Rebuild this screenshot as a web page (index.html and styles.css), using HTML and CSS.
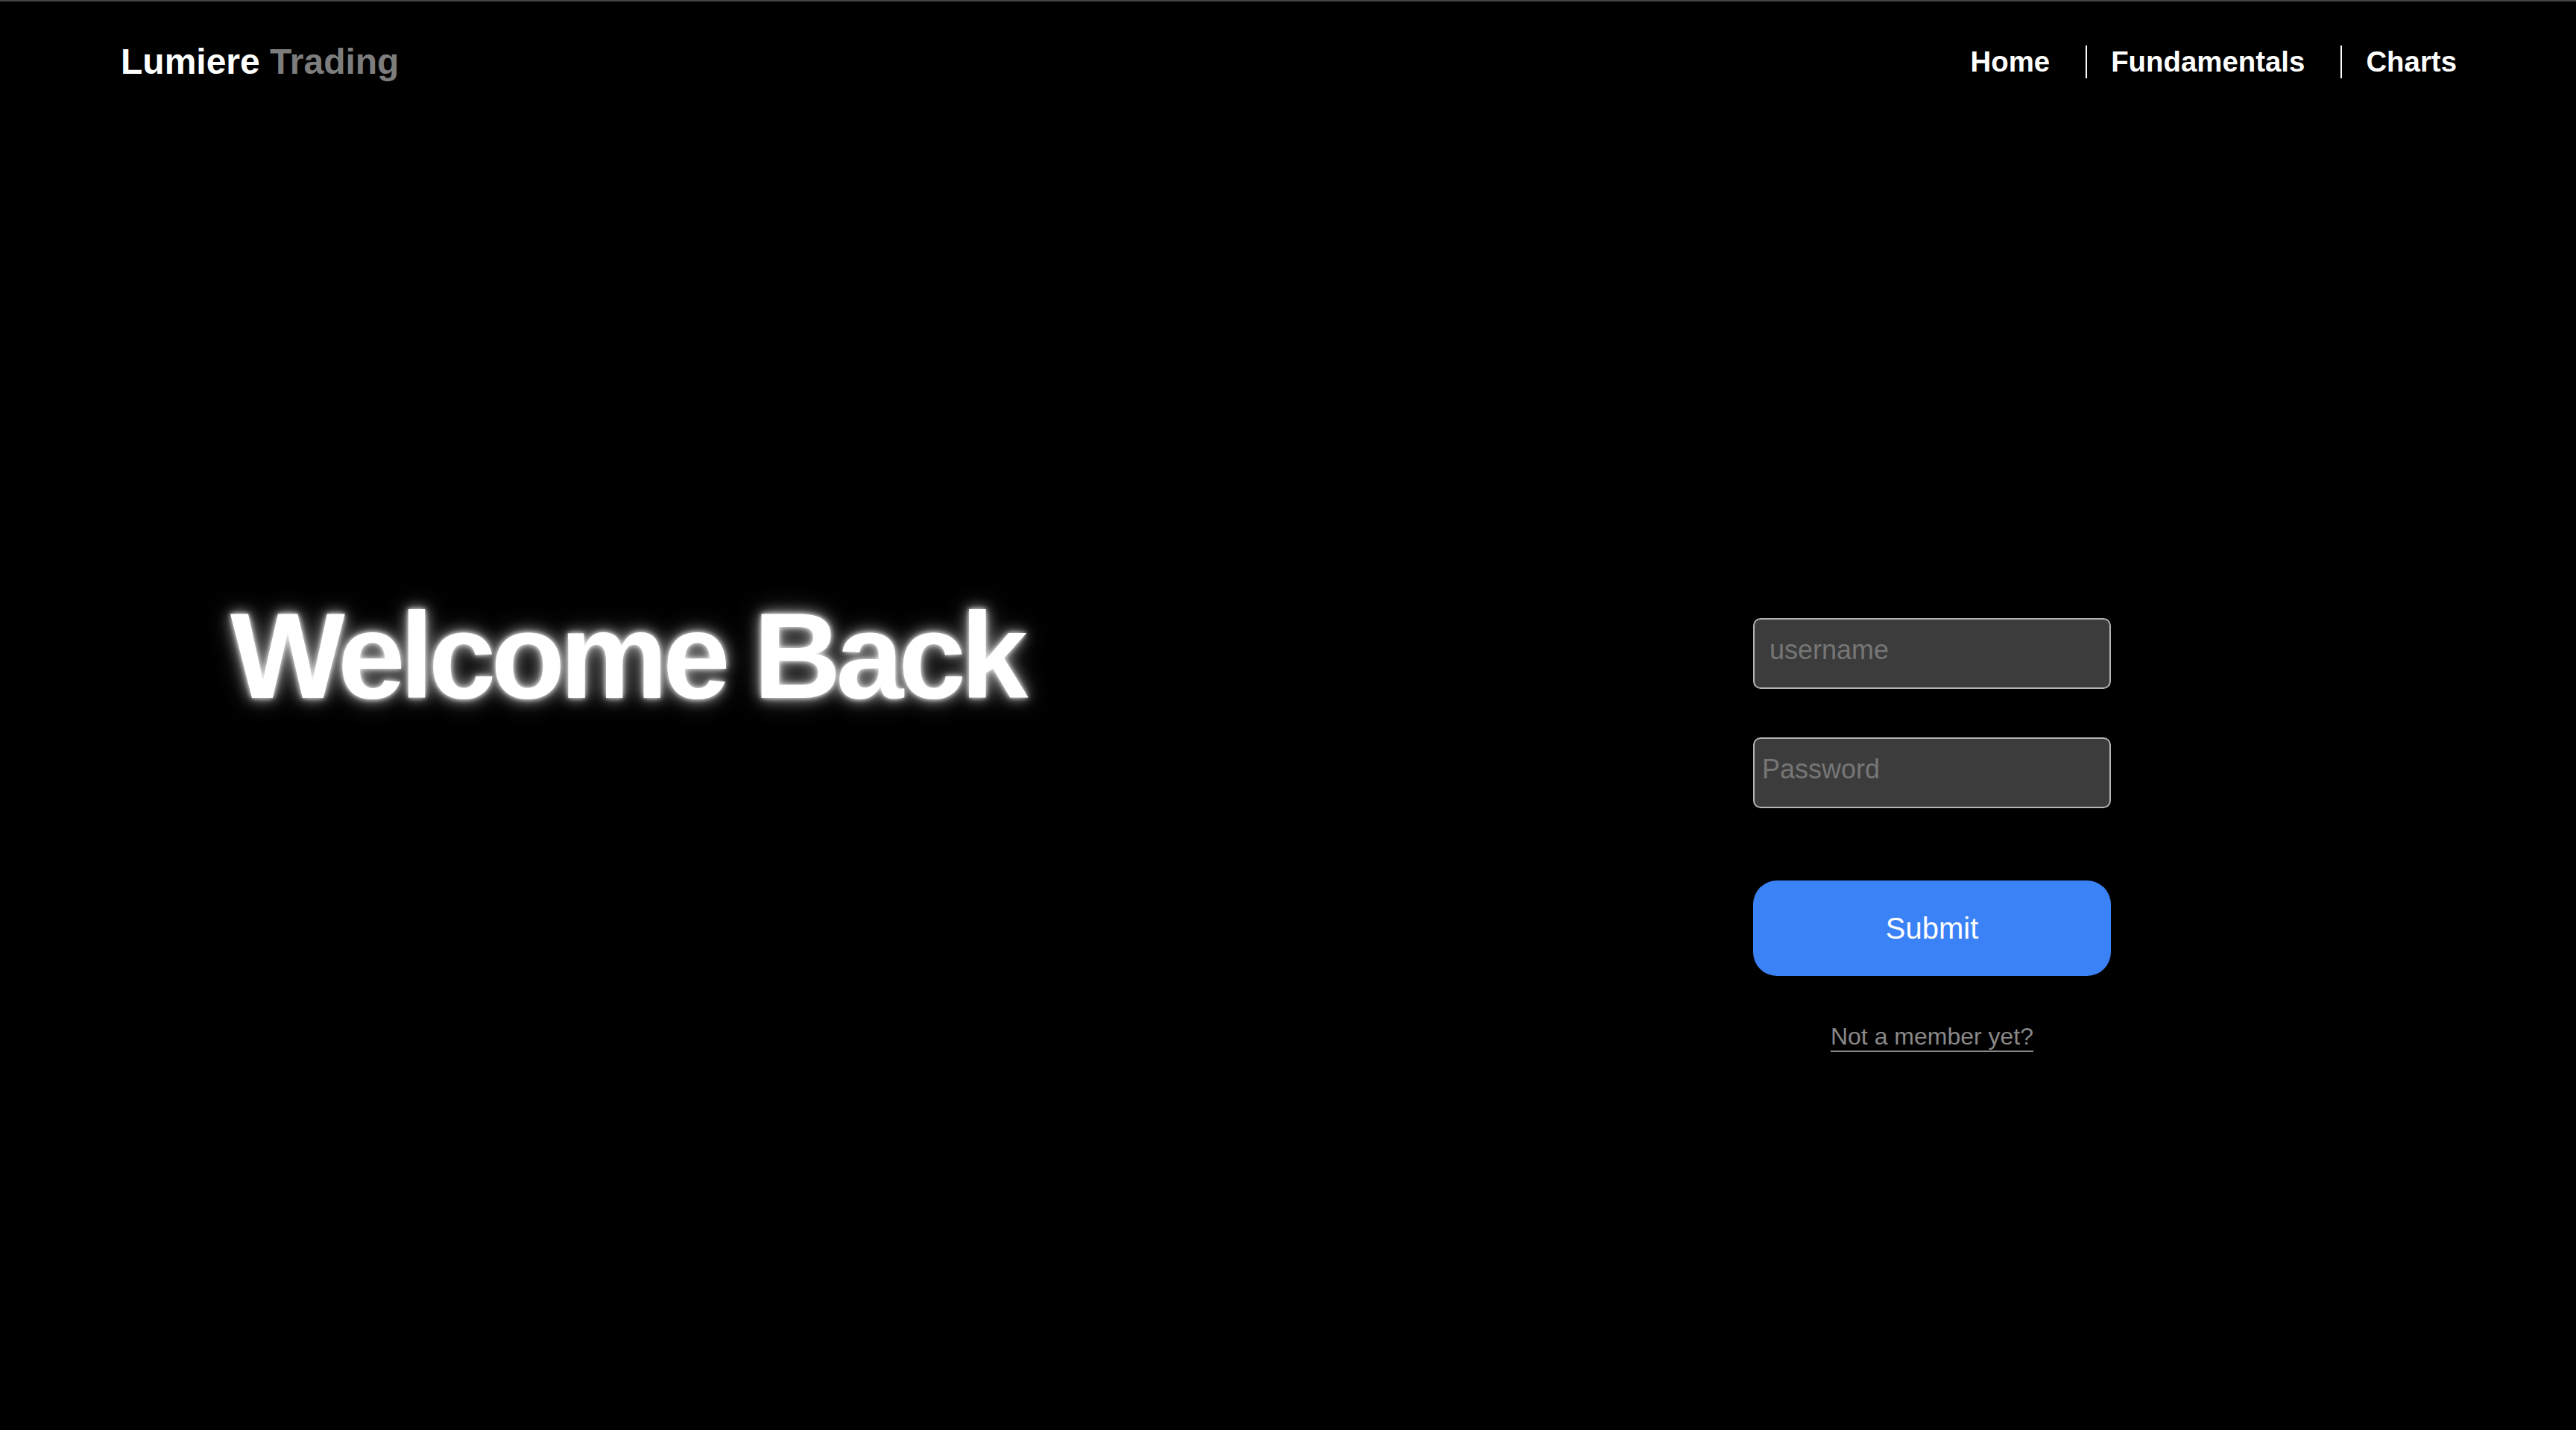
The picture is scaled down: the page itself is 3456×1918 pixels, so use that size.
FILE: index.html
```html
<!DOCTYPE html>
<html lang="en">
<head>
<meta charset="utf-8">
<title>Lumiere Trading — Login</title>
<link rel="stylesheet" href="styles.css">
</head>
<body>
<div class="page">
  <header class="topbar">
    <div class="brand"><span class="brand-main">Lumiere</span> <span class="brand-sub">Trading</span></div>
    <nav class="nav">
      <a class="nav-link" href="#">Home</a>
      <a class="nav-link sep" href="#">Fundamentals</a>
      <a class="nav-link sep" href="#">Charts</a>
    </nav>
  </header>
  <main class="main">
    <section class="hero">
      <h1 class="welcome">Welcome Back</h1>
    </section>
    <section class="login">
      <form class="login-form" onsubmit="return false">
        <input class="field field-user" type="text" placeholder="username">
        <input class="field field-pass" type="password" placeholder="Password">
        <button class="submit" type="submit">Submit</button>
        <a class="signup" href="#">Not a member yet?</a>
      </form>
    </section>
  </main>
</div>
</body>
</html>
```

FILE: styles.css
```css
html, body {
  margin: 0;
  padding: 0;
  background: #000;
}

body {
  font-family: "Liberation Sans", Arial, Helvetica, sans-serif;
  color: #fff;
}

.page {
  min-height: 1916px;
  border-top: 2px solid #464646;
  display: flex;
  flex-direction: column;
}

.topbar {
  height: 162px;
  padding: 0 160px 0 162px;
  display: flex;
  align-items: center;
  justify-content: space-between;
}

.brand {
  font-size: 48px;
  font-weight: 700;
  line-height: 1.15;
}

.brand-main {
  color: #fff;
}

.brand-sub {
  color: #7d7d7d;
}

.nav {
  display: flex;
  align-items: center;
  gap: 48px;
}

.nav-link {
  color: #fff;
  text-decoration: none;
  font-size: 38.4px;
  font-weight: 700;
  line-height: 44px;
}

.nav-link.sep {
  border-left: 2px solid #fff;
  padding-left: 32px;
}

.main {
  display: grid;
  grid-template-columns: 1fr 1fr;
  align-items: start;
}

.hero {
  padding: 622px 0 0 309px;
}

.welcome {
  margin: 0;
  font-size: 163px;
  font-weight: 700;
  line-height: 1.15;
  letter-spacing: -0.043em;
  color: #fff;
  white-space: nowrap;
  text-shadow:
    0 0 6px rgba(255, 255, 255, 0.95),
    0 0 18px rgba(255, 255, 255, 0.7),
    0 0 34px rgba(255, 255, 255, 0.35);
}

.login {
  padding-top: 665px;
  display: flex;
  justify-content: center;
}

.login-form {
  width: 480px;
  display: flex;
  flex-direction: column;
  align-items: stretch;
}

.field {
  box-sizing: border-box;
  height: 95px;
  width: 100%;
  margin: 0;
  border: 2px solid #b3b3b3;
  border-radius: 10px;
  background: #3c3c3c;
  color: #ddd;
  font-family: "Liberation Sans", Arial, Helvetica, sans-serif;
  font-size: 36px;
  padding: 0 20px 10px 20px;
  outline: none;
}

.field::placeholder {
  color: #767676;
  opacity: 1;
}

.field-pass {
  margin-top: 65px;
  padding-left: 10px;
}

.submit {
  margin-top: 97px;
  height: 128px;
  width: 100%;
  border: none;
  border-radius: 32px;
  background: #3b82f6;
  color: #fff;
  font-family: "Liberation Sans", Arial, Helvetica, sans-serif;
  font-size: 40px;
  cursor: pointer;
}

.signup {
  align-self: center;
  margin-top: 63px;
  font-size: 32px;
  line-height: 1.15;
  color: #888;
  text-decoration: underline;
  text-decoration-thickness: 2px;
  text-underline-offset: 8px;
}
```
